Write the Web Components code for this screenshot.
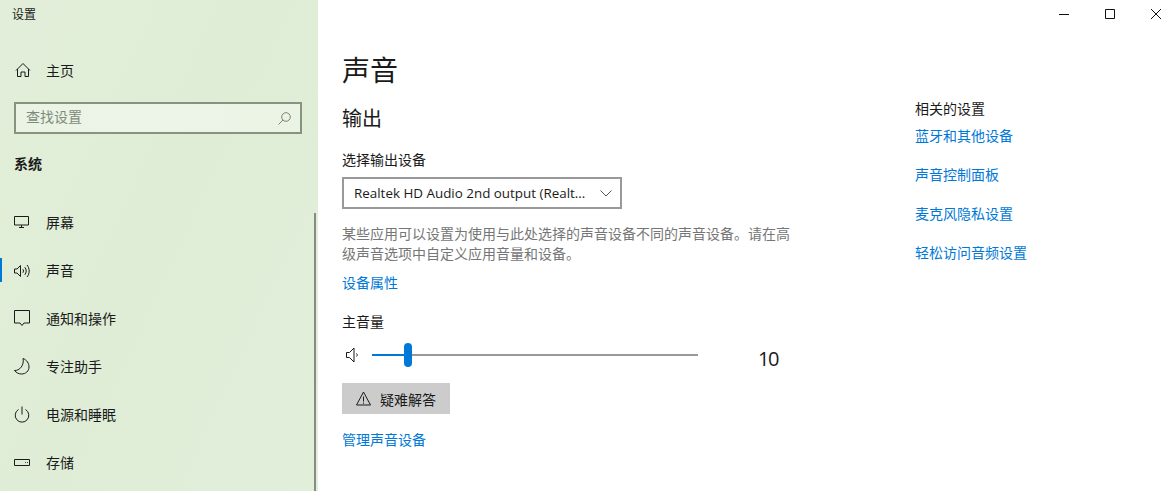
<!DOCTYPE html>
<html lang="zh-CN">
<head>
<meta charset="utf-8">
<title>设置</title>
<style>
    html, body { margin: 0; height: 100%; background: #fff; overflow: hidden; }
    body { font-family: "Noto Sans CJK SC", "Noto Sans", sans-serif; font-size: 14px; color: #1a1a1a; }
</style>
</head>
<body>

<settings-window>
    <settings-sidebar slot="sidebar">
        <nav-item icon="home" slot="home">主页</nav-item>
        <search-box slot="search" placeholder="查找设置"></search-box>
        <span slot="section">系统</span>
        <nav-item icon="display">屏幕</nav-item>
        <nav-item icon="sound" active>声音</nav-item>
        <nav-item icon="note">通知和操作</nav-item>
        <nav-item icon="moon">专注助手</nav-item>
        <nav-item icon="power">电源和睡眠</nav-item>
        <nav-item icon="storage">存储</nav-item>
    </settings-sidebar>

    <sound-page slot="main"></sound-page>

    <related-links slot="aside">
        <span slot="title">相关的设置</span>
        <link-text>蓝牙和其他设备</link-text>
        <link-text>声音控制面板</link-text>
        <link-text>麦克风隐私设置</link-text>
        <link-text>轻松访问音频设置</link-text>
    </related-links>
</settings-window>

<script>
const ICONS = {
    home: '<path d="M2 7.500 9 .5l7 7M3.500 6v7.500H7V9h4v4.500h3.500V6"/>',
    display: '<path d="M.5 1.500h14V10H.5zM7.500 10v2.500M5 12.500h5"/>',
    sound: '<path d="M.5 6h2.500L6.500 2.500v11L3 10H.5zM8.800 6.200c.9 1 .9 2.600 0 3.600M10.800 4.200c1.900 2.200 1.900 5.400 0 7.600M13 2c2.900 3.200 2.900 8.800 0 12"/>',
    note: '<path d="M.5-.5h15V12H10l-2 2.500L6 12H.5z"/>',
    moon: '<path d="M9-.5C13 1 15 4.500 15 8c0 4-3.300 7-7.500 7C4.500 15 2 13.500.5 11.500 5.500 12 10.500 6 9-.5z"/>',
    power: '<path d="M4.500 2.500a6.800 6.800 0 1 0 7 0M8-.5v8"/>',
    storage: '<path d="M.5 4.500h15v6H.5zM11 7.500h.8M13 7.500h.8"/>'
};

class SettingsWindow extends HTMLElement {
    constructor() {
        super();
        this.attachShadow({ mode: 'open' });
        this.shadowRoot.innerHTML = `
        <style>
            :host { display: flex; height: 491px; overflow: hidden; background: #fff; }
            .content { flex: 1; display: flex; flex-direction: column; min-width: 0; }
            .caption { display: flex; justify-content: flex-end; height: 32px; flex: none; margin-right: -4px; }
            .caption button { width: 46px; height: 28px; padding: 0; border: 0; background: none; display: flex; align-items: center; justify-content: center; }
            .caption svg { width: 10px; height: 10px; fill: none; stroke: #111; stroke-width: 1; display: block; }
            .columns { flex: 1; display: flex; min-height: 0; }
            .main { width: 573px; flex: none; padding-left: 24px; }
            .aside { flex: 1; }
        </style>
        <slot name="sidebar"></slot>
        <div class="content">
            <div class="caption">
                <button aria-label="最小化"><svg viewBox="0 0 10 10"><path d="M0 5.500h10"/></svg></button>
                <button aria-label="最大化"><svg viewBox="0 0 10 10"><path d="M.5.500h9v9h-9z"/></svg></button>
                <button aria-label="关闭"><svg viewBox="0 0 10 10"><path d="M0 0l10 10M10 0 0 10"/></svg></button>
            </div>
            <div class="columns">
                <div class="main"><slot name="main"></slot></div>
                <div class="aside"><slot name="aside"></slot></div>
            </div>
        </div>`;
    }
}

class SettingsSidebar extends HTMLElement {
    constructor() {
        super();
        this.attachShadow({ mode: 'open' });
        this.shadowRoot.innerHTML = `
        <style>
            :host {
                display: block; position: relative; flex: none; width: 318px; height: 491px; overflow: hidden;
                background: linear-gradient(115deg, #e2eed9 0%, #dfedd6 45%, #e1eeda 100%);
            }
            .title { height: 28px; line-height: 28px; padding-left: 12px; font-size: 12px; }
            .gap { height: 19px; }
            .search { padding: 7px 16px 0 14px; }
            .section { height: 65px; box-sizing: border-box; padding: 19px 0 0 14px; line-height: 20px; font-weight: 700; font-size: 14px; }
            /* scrollbar lies over the list */
            .thumb { position: absolute; left: 314px; top: 213px; width: 2px; height: 278px; background: #868c84; }
        </style>
        <div class="title">设置</div>
        <div class="gap"></div>
        <slot name="home"></slot>
        <div class="search"><slot name="search"></slot></div>
        <div class="section"><slot name="section"></slot></div>
        <slot></slot>
        <div class="thumb"></div>`;
    }
}

class NavItem extends HTMLElement {
    constructor() {
        super();
        this.attachShadow({ mode: 'open' });
    }

    connectedCallback() {
        const icon = ICONS[this.getAttribute('icon')] || '';
        this.shadowRoot.innerHTML = `
        <style>
            :host { display: flex; align-items: center; gap: 16px; height: 48px; padding-left: 14px; position: relative; font-size: 14px; }
            svg { width: 16px; height: 16px; fill: none; stroke: #1a1a1a; stroke-width: 1; flex: none; overflow: visible; }
            span { margin-top: -2px; }
            :host([active])::before { content: ""; position: absolute; left: 0; top: 11px; width: 2px; height: 24px; background: #0078d7; }
        </style>
        <svg viewBox="0 0 16 16">${icon}</svg>
        <span><slot></slot></span>`;
    }
}

class SearchBox extends HTMLElement {
    constructor() {
        super();
        this.attachShadow({ mode: 'open' });
    }

    connectedCallback() {
        this.shadowRoot.innerHTML = `
        <style>
            :host {
                display: flex; align-items: center; justify-content: space-between; height: 32px; box-sizing: border-box;
                padding: 0 9px 0 10px; border: 2px solid #88937f; color: #7f8a7c; font-size: 14px;
                background: linear-gradient(90deg, #eaf3e4, #edf5e8 50%, #eaf3e4);
            }
            span { margin-top: -4px; }
            svg { width: 13px; height: 13px; fill: none; stroke: #7a8577; stroke-width: 1; }
        </style>
        <span>${this.getAttribute('placeholder')}</span>
        <svg viewBox="0 0 13 13"><circle cx="8" cy="5" r="4.300"/><path d="M5 8 .5 12.500"/></svg>`;
    }
}

class LinkText extends HTMLElement {
    constructor() {
        super();
        this.attachShadow({ mode: 'open' });
        this.shadowRoot.innerHTML = `
        <style>
            :host { display: block; color: #0078d7; font-size: 14px; line-height: 20px; }
        </style>
        <slot></slot>`;
    }
}

class RelatedLinks extends HTMLElement {
    constructor() {
        super();
        this.attachShadow({ mode: 'open' });
        this.shadowRoot.innerHTML = `
        <style>
            :host { display: block; padding-top: 66px; }
            .title { line-height: 20px; font-size: 14px; margin-bottom: 7px; }
            .list { display: flex; flex-direction: column; gap: 19px; }
        </style>
        <div class="title"><slot name="title"></slot></div>
        <div class="list"><slot></slot></div>`;
    }
}

class VolumeSlider extends HTMLElement {
    constructor() {
        super();
        this.attachShadow({ mode: 'open' });
        this.shadowRoot.innerHTML = `
        <style>
            :host { display: flex; height: 32px; align-items: center; }
            .speaker { width: 13px; height: 16px; margin-left: 4px; fill: none; stroke: #1a1a1a; stroke-width: 1; flex: none; }
            .track { width: 326px; height: 2px; margin-left: 13px; background: #999; position: relative; flex: none; }
            .fill { width: 32px; height: 2px; background: #0078d7; }
            .thumb { position: absolute; left: 32px; top: -11px; width: 8px; height: 24px; border-radius: 4px; background: #0078d7; }
            .value { margin-left: 60px; font-size: 20px; letter-spacing: -1.500px; line-height: 24px; padding-top: 8px; font-family: "Open Sans", "Noto Sans", sans-serif; }
        </style>
        <svg class="speaker" viewBox="0 0 13 16"><path d="M.5 5.500h3L8 1v14l-4.500-4.500h-3zM10.500 6.500c1 1 1 2 0 3"/></svg>
        <div class="track"><div class="fill"></div><div class="thumb"></div></div>
        <div class="value"><slot></slot></div>`;
    }
}

class SoundPage extends HTMLElement {
    constructor() {
        super();
        this.attachShadow({ mode: 'open' });
        this.shadowRoot.innerHTML = `
        <style>
            :host { display: block; }
            h1 { margin: 0; font-size: 28px; font-weight: 400; line-height: 40px; padding-top: 17px; }
            h2 { margin: 0; font-size: 20px; font-weight: 400; line-height: 28px; padding-top: 15px; }
            .label { line-height: 20px; margin-top: 17px; }
            .select {
                width: 280px; height: 32px; box-sizing: border-box; margin-top: 8px; border: 2px solid #999; padding: 0 8px 0 10px;
                display: flex; align-items: center; justify-content: space-between;
                font-family: "Open Sans", "Noto Sans", sans-serif; font-size: 13.400px;
            }
            .select svg { width: 12px; height: 7px; fill: none; stroke: #555; stroke-width: 1; }
            .desc { width: 452px; margin: 14px 0 0; line-height: 20px; color: #767676; }
            .props { margin-top: 9px; }
            .volume-label { margin-top: 19px; line-height: 20px; }
            volume-slider { margin-top: 8px; }
            button {
                display: flex; align-items: center; gap: 9px; height: 31px; width: 108px; box-sizing: border-box; padding: 0 0 0 14px; margin-top: 12px;
                border: 0; background: #ccc; color: #1a1a1a; font: inherit;
            }
            button svg { width: 15px; height: 15px; fill: none; stroke: #1a1a1a; stroke-width: 1; flex: none; }
            .manage { margin-top: 15px; }
        </style>
        <h1>声音</h1>
        <h2>输出</h2>
        <div class="label">选择输出设备</div>
        <div class="select">
            <span>Realtek HD Audio 2nd output (Realt...</span>
            <svg viewBox="0 0 12 7"><path d="M.5.500 6 6l5.500-5.500"/></svg>
        </div>
        <p class="desc">某些应用可以设置为使用与此处选择的声音设备不同的声音设备。请在高级声音选项中自定义应用音量和设备。</p>
        <link-text class="props">设备属性</link-text>
        <div class="volume-label">主音量</div>
        <volume-slider>10</volume-slider>
        <button>
            <svg viewBox="0 0 15 15"><path d="M7.500 1 14.500 14H.5zM7.500 5.500v5M7.500 11.500v1.200"/></svg>
            <span>疑难解答</span>
        </button>
        <link-text class="manage">管理声音设备</link-text>`;
    }
}

customElements.define('settings-window', SettingsWindow);
customElements.define('settings-sidebar', SettingsSidebar);
customElements.define('nav-item', NavItem);
customElements.define('search-box', SearchBox);
customElements.define('link-text', LinkText);
customElements.define('related-links', RelatedLinks);
customElements.define('volume-slider', VolumeSlider);
customElements.define('sound-page', SoundPage);
</script>
</body>
</html>
